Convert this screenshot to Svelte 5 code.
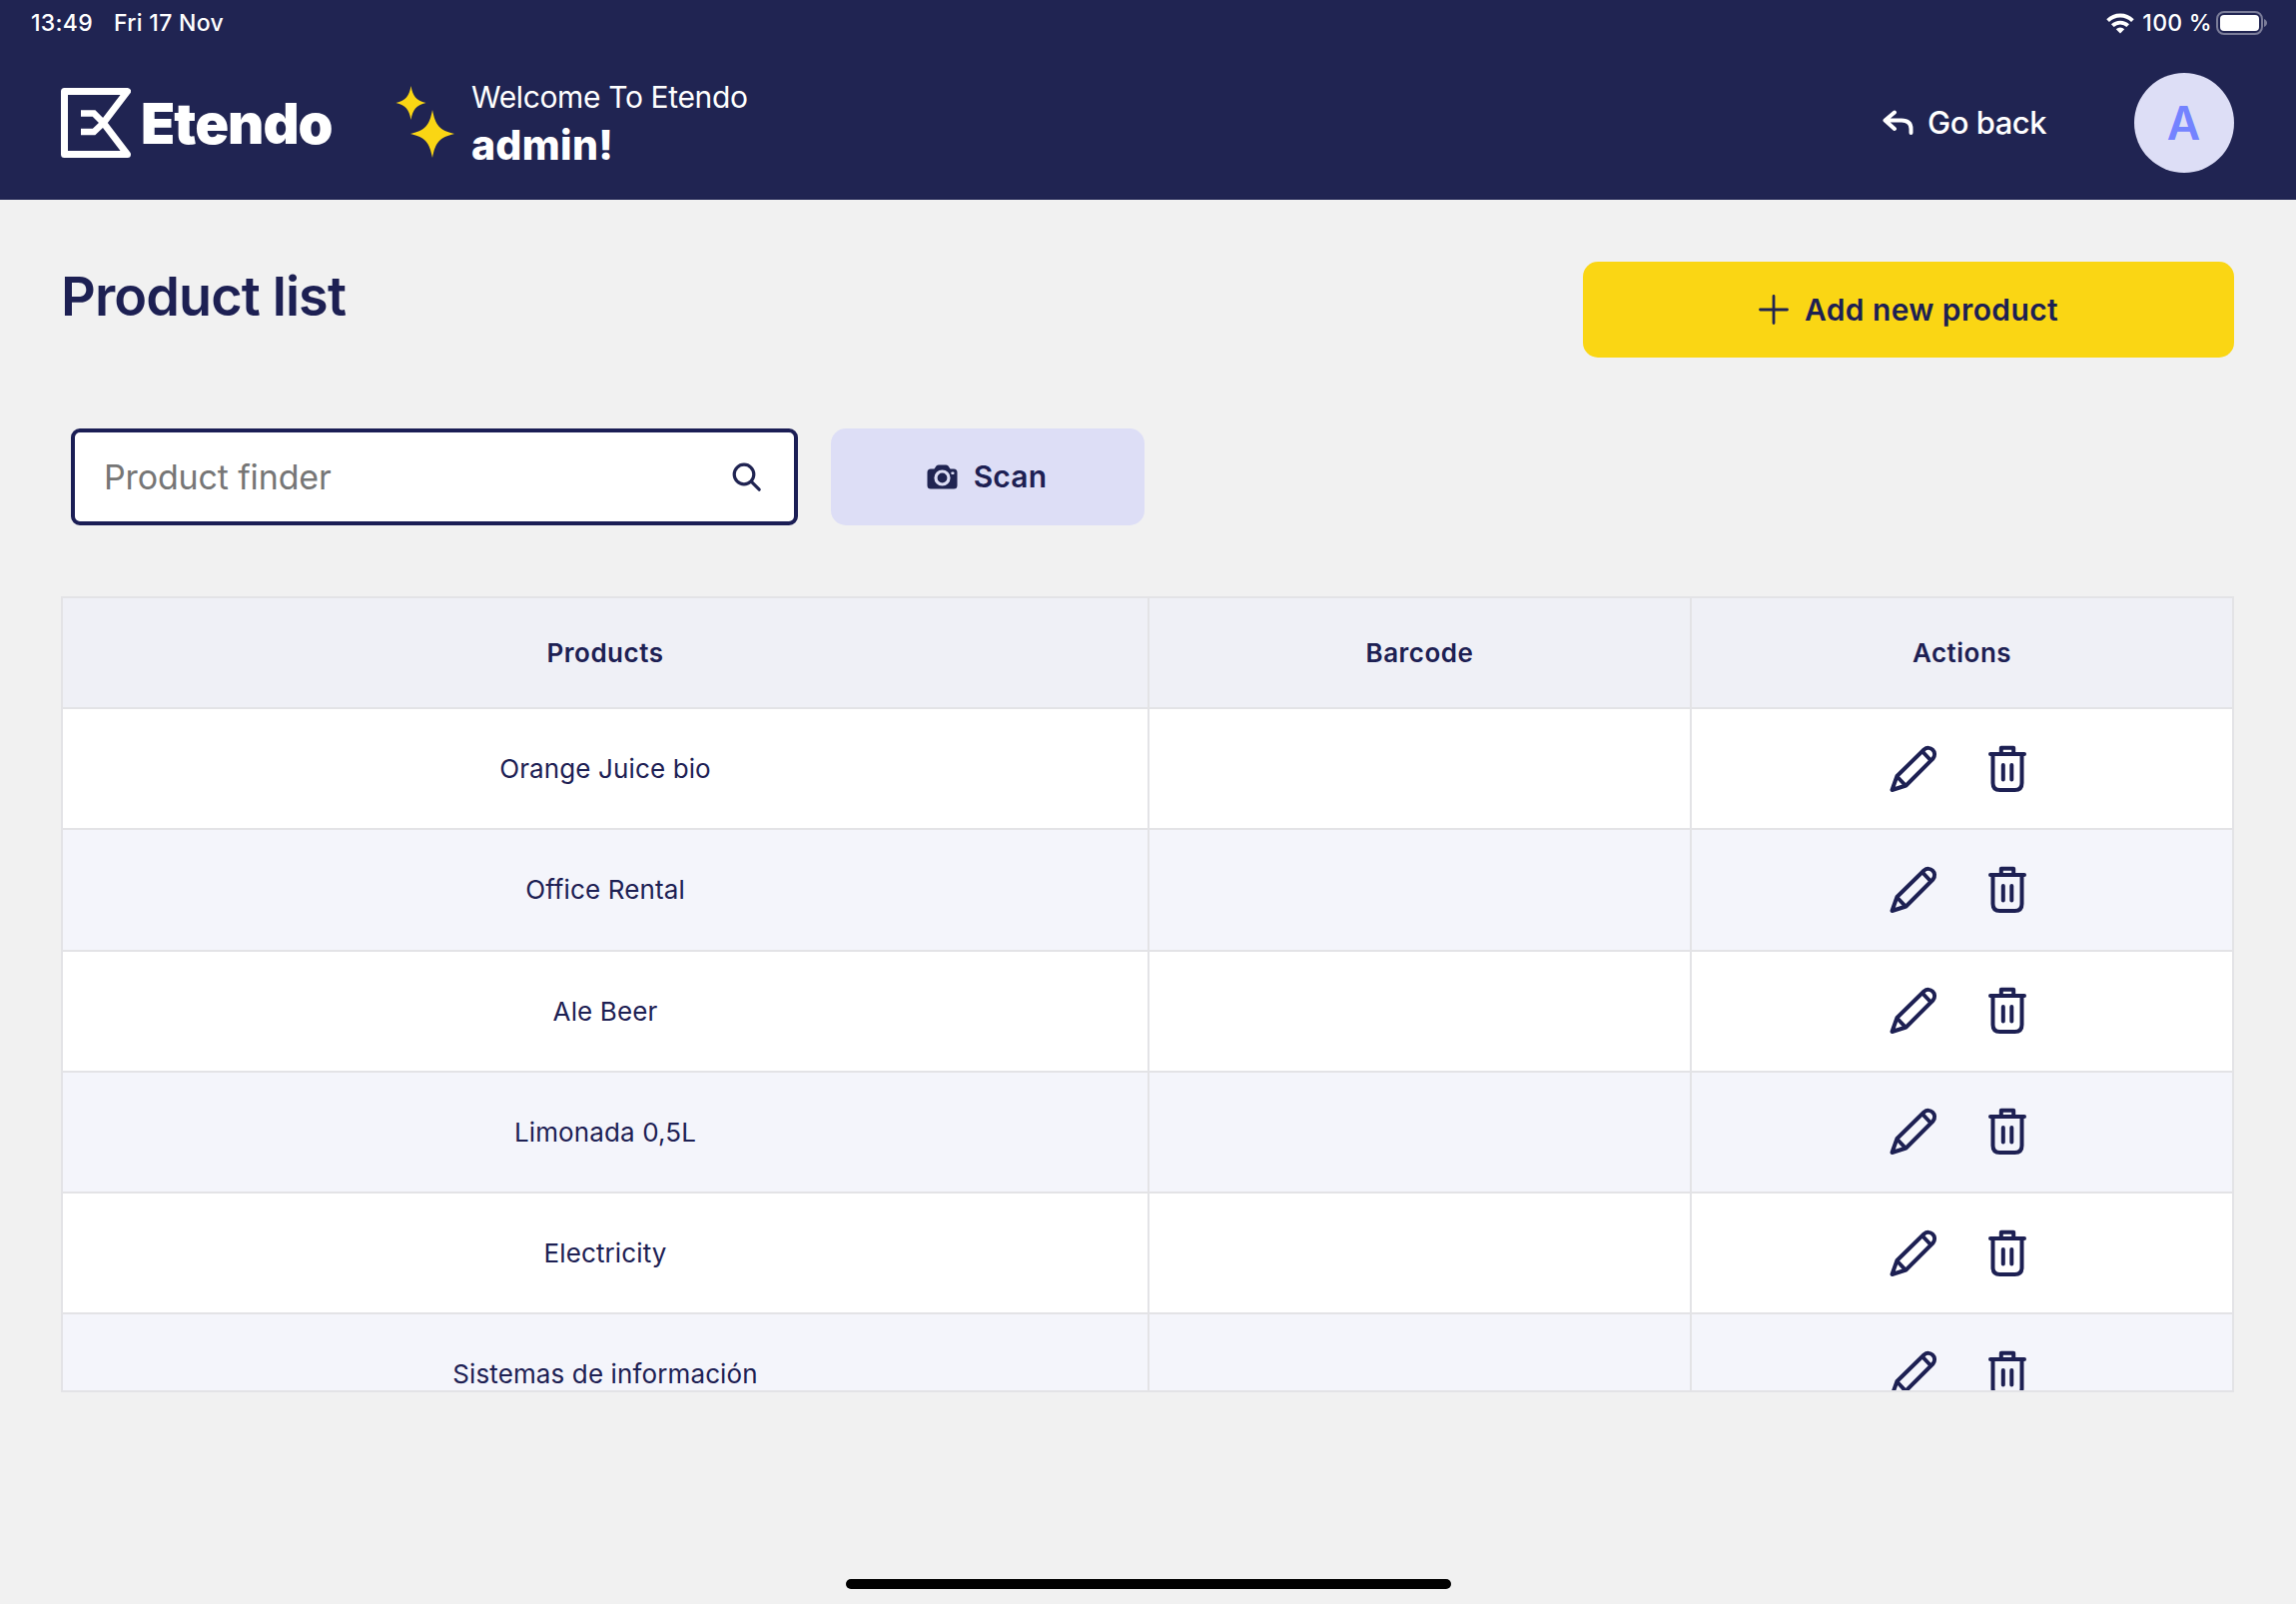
<script>
  const products = [
    'Orange Juice bio',
    'Office Rental',
    'Ale Beer',
    'Limonada 0,5L',
    'Electricity',
    'Sistemas de información'
  ];
</script>

<div class="screen">
  <header>
    <div class="status">
      <span class="time">13:49</span>
      <span class="date">Fri 17 Nov</span>
      <svg class="wifi" viewBox="0 0 28 21" width="28" height="21">
        <g fill="none" stroke="#fff" stroke-width="3.800">
          <path d="M1.600 7.600a17.600 17.600 0 0 1 24.800 0" />
          <path d="M6.300 12.700a11 11 0 0 1 15.400 0" />
        </g>
        <path d="M14 20.500l-4.200-4.300a6 6 0 0 1 8.400 0z" fill="#fff" />
      </svg>
      <span class="percent">100 %</span>
      <svg class="battery" viewBox="0 0 52 24" width="52" height="24">
        <rect x="1" y="1" width="45" height="22" rx="7" fill="none" stroke="#7b7d99" stroke-width="2" />
        <rect x="4" y="4" width="39" height="16" rx="4" fill="#fff" />
        <path d="M48 8c4 1.500 4 6.500 0 8z" fill="#7b7d99" />
      </svg>
    </div>

    <div class="bar">
      <svg class="mark" viewBox="0 0 70 70" width="70" height="70">
        <g fill="none" stroke="#fff" stroke-linejoin="round">
          <path stroke-width="7" d="M42.500 35L66.500 3.500H3.500V66.500H66.500Z" />
          <path stroke-width="6.500" stroke-linejoin="miter" d="M20 25.500H33L42.500 35L33 44H20" />
        </g>
      </svg>
      <span class="brand">Etendo</span>
      <svg class="sparkles" viewBox="0 0 62 76" width="62" height="76">
        <g fill="#fad614">
          <path d="M16.500 1C18.500 11.500 21.500 15.500 31.500 18C21.500 20.500 18.500 24.500 16.500 35C14.500 24.500 11.500 20.500 1.500 18C11.500 15.500 14.500 11.500 16.500 1Z" />
          <path d="M38 25C41 40.500 45 45.500 60 49C45 52.500 41 57.500 38 73C35 57.500 31 52.500 16 49C31 45.500 35 40.500 38 25Z" />
        </g>
      </svg>
      <div class="welcome">
        <span class="hello">Welcome To Etendo</span>
        <strong>admin!</strong>
      </div>
      <div class="back">
        <svg viewBox="0 0 32 26" width="32" height="26">
          <path d="M12 2.500L2.500 10.500L12 19M3 10.500H19C26 10.500 28.500 14 28.500 19V23" fill="none" stroke="#fff" stroke-width="4" stroke-linecap="round" stroke-linejoin="round" />
        </svg>
        <span>Go back</span>
      </div>
      <div class="avatar">A</div>
    </div>
  </header>

  <main>
    <div class="heading">
      <h1>Product list</h1>
      <button class="add">
        <svg viewBox="0 0 30 30" width="30" height="30">
          <path d="M15 1.500V28.500M1.500 15H28.500" stroke="#202452" stroke-width="2.800" stroke-linecap="round" />
        </svg>
        <span>Add new product</span>
      </button>
    </div>

    <div class="tools">
      <div class="finder">
        <span>Product finder</span>
        <svg viewBox="0 0 30 30" width="30" height="30">
          <g fill="none" stroke="#202452" stroke-width="3.200" stroke-linecap="round">
            <circle cx="12" cy="12" r="9.800" />
            <path d="M19.200 19.200L27.200 27.200" />
          </g>
        </svg>
      </div>
      <button class="scan">
        <svg viewBox="0 0 31 25" width="31" height="25">
          <path d="M4 4.500H7.500L9.500 1.500Q10.500 .5 12 .5H19Q20.500 .5 21.500 1.500L23.500 4.500H27Q30.500 4.500 30.500 8V21Q30.500 24.500 27 24.500H4Q.5 24.500 .5 21V8Q.5 4.500 4 4.500Z" fill="#202452" />
          <circle cx="15.500" cy="13.500" r="6.500" fill="none" stroke="#dddef6" stroke-width="3.200" />
          <rect x="24.300" y="7.500" width="3.200" height="2.400" rx="1" fill="#dddef6" />
        </svg>
        <span>Scan</span>
      </button>
    </div>

    <div class="table">
      <div class="row head">
        <div>Products</div>
        <div>Barcode</div>
        <div>Actions</div>
      </div>
      {#each products as name}
        <div class="row">
          <div>{name}</div>
          <div></div>
          <div class="actions">
            <svg viewBox="0 0 48 48" width="48" height="48">
              <g fill="none" stroke="#1d2053" stroke-width="4" stroke-linejoin="round">
                <path d="M2.500 45L7.500 31L34.500 4.500C40.500 -.5 48.500 7 43.500 13.500L16.500 40.500Z" />
                <path d="M33 6.500L41.500 15.500M7.500 31.500L16 40.500" />
              </g>
            </svg>
            <svg viewBox="0 0 38 48" width="38" height="48">
              <g fill="none" stroke="#1d2053" stroke-width="4" stroke-linecap="round" stroke-linejoin="round">
                <path d="M2 9H36M12.800 8.500V2.800H25.200V8.500M4.500 9.500V38Q4.500 45 11.500 45H26.500Q33.500 45 33.500 38V9.500M14.800 20V34.500M23.300 20V34.500" />
              </g>
            </svg>
          </div>
        </div>
      {/each}
    </div>
  </main>

  <div class="home"></div>
</div>

<style>
  :global(body) {
    margin: 0;
    background: #f1f1f1;
  }
  .screen {
    width: 2299px;
    height: 1606px;
    overflow: hidden;
    display: flex;
    flex-direction: column;
    background: #f1f1f1;
    color: #1d2053;
    font-family: Inter, 'Liberation Sans', sans-serif;
  }
  svg {
    display: block;
    flex: none;
  }
  span,
  strong {
    white-space: nowrap;
  }
  header {
    height: 200px;
    flex: none;
    background: #202452;
    color: #fff;
  }
  .status {
    height: 46px;
    display: flex;
    align-items: center;
    padding: 0 28px 0 31px;
    font-size: 23px;
    font-weight: 500;
    letter-spacing: 0.300px;
  }
  .date {
    margin-left: 21px;
  }
  .wifi {
    margin-left: auto;
  }
  .percent {
    margin: 0 4px 0 8px;
  }
  .bar {
    height: 154px;
    display: flex;
    align-items: center;
    padding: 0 62px 0 61px;
  }
  .mark {
    margin-right: 10px;
  }
  .brand {
    width: 254px;
    padding-top: 2px;
    font-size: 56px;
    font-weight: 900;
    line-height: 70px;
    letter-spacing: -1px;
  }
  .sparkles {
    margin-right: 15px;
  }
  .welcome {
    display: flex;
    flex-direction: column;
    padding-bottom: 4px;
  }
  .hello {
    font-size: 30px;
    line-height: 48px;
    letter-spacing: -0.360px;
  }
  .welcome strong {
    font-size: 41px;
    line-height: 48px;
    font-weight: 800;
    letter-spacing: 0.250px;
  }
  .back {
    margin-left: auto;
    display: flex;
    align-items: center;
    gap: 13px;
    font-size: 31px;
    line-height: 40px;
    font-weight: 500;
    letter-spacing: -0.500px;
    padding-bottom: 1px;
  }
  .avatar {
    width: 100px;
    height: 100px;
    margin-left: 88px;
    border-radius: 50%;
    background: #dddef6;
    color: #7483ff;
    font-size: 46px;
    font-weight: 600;
    line-height: 100px;
    text-align: center;
    text-indent: -1px;
  }
  main {
    flex: 1;
    padding: 62px 62px 0 61px;
  }
  .heading {
    display: flex;
    justify-content: space-between;
    align-items: flex-start;
  }
  h1 {
    margin: 0;
    font-size: 54px;
    line-height: 69px;
    font-weight: 600;
    letter-spacing: -0.900px;
  }
  button {
    display: flex;
    align-items: center;
    justify-content: center;
    height: 96px;
    padding: 0;
    border: 0;
    border-radius: 15px;
    color: #1d2053;
    font-family: inherit;
    font-size: 30px;
    font-weight: 600;
  }
  button span {
    padding-bottom: 1px;
  }
  .add {
    width: 652px;
    gap: 16px;
    background: #fad614;
    letter-spacing: 0.400px;
  }
  .tools {
    display: flex;
    gap: 33px;
    margin: 71px 0 0 10px;
  }
  .finder {
    box-sizing: border-box;
    width: 728px;
    height: 97px;
    display: flex;
    align-items: center;
    justify-content: space-between;
    padding: 0 32px 0 29px;
    border: 4px solid #1b1e55;
    border-radius: 9px;
    background: #fff;
    color: #767676;
    font-size: 34px;
    letter-spacing: -0.150px;
  }
  .scan {
    width: 314px;
    height: 97px;
    gap: 16px;
    padding-right: 2px;
    background: #dddef6;
    letter-spacing: 0.200px;
  }
  .table {
    box-sizing: border-box;
    height: 797px;
    margin-top: 71px;
    overflow: hidden;
    border: 2px solid #e3e3e6;
    background: #fff;
    font-size: 26px;
  }
  .row {
    box-sizing: border-box;
    height: 121.250px;
    display: grid;
    grid-template-columns: 1086px 543px 1fr;
    border-bottom: 2px solid #e3e3e6;
    letter-spacing: 0.120px;
  }
  .row:nth-child(odd) {
    background: #f4f5fb;
  }
  .row.head {
    height: 111px;
    background: #eff0f6;
    font-weight: 600;
    letter-spacing: 0.500px;
  }
  .row > div {
    display: flex;
    align-items: center;
    justify-content: center;
  }
  .row > div + div {
    border-left: 2px solid #e3e3e6;
  }
  .row .actions {
    gap: 51px;
    padding-right: 9px;
  }
  .home {
    width: 606px;
    height: 10px;
    margin: 0 auto 15px;
    border-radius: 5px;
    background: #000;
  }
</style>
